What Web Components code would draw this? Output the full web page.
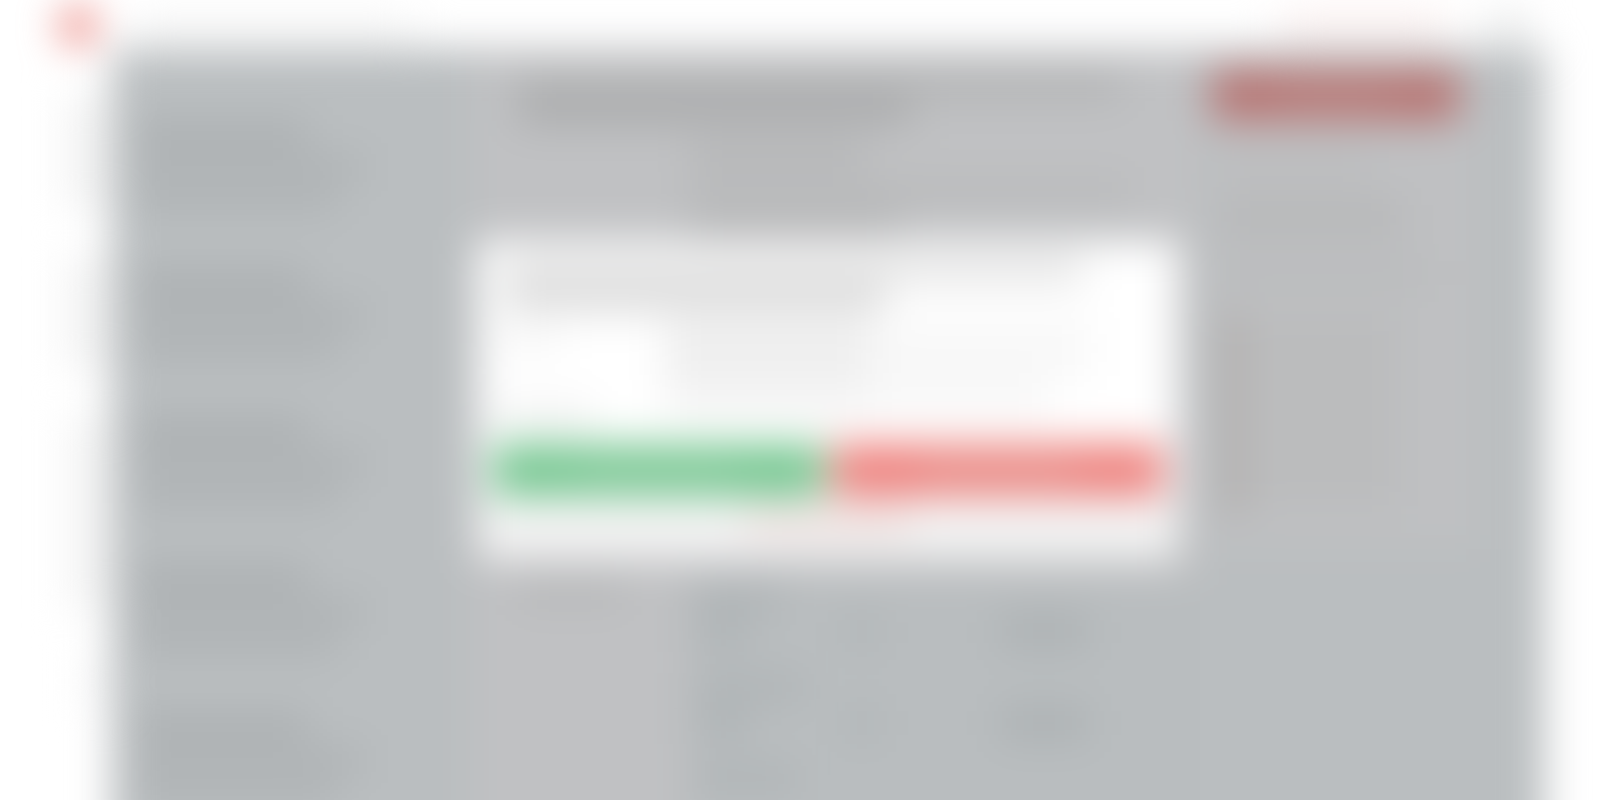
<!DOCTYPE html>
<html lang="en">
<head>
<meta charset="utf-8">
<meta name="viewport" content="width=device-width, initial-scale=1">
<title>Dashboard</title>
<style>
    html,
    body {
        margin: 0;
        height: 100%;
        overflow: hidden;
        background: #fff;
        font-family: 'Open Sans', sans-serif;
    }
</style>
</head>
<body>
<app-page>
    <app-header slot="header"></app-header>
    <app-rail slot="rail"></app-rail>
    <item-list slot="list">
        <list-item></list-item>
        <list-item></list-item>
        <list-item></list-item>
        <list-item></list-item>
        <list-item></list-item>
    </item-list>
    <detail-panel slot="detail"></detail-panel>
    <side-card slot="side"></side-card>
    <confirm-dialog slot="dialog"></confirm-dialog>
</app-page>

<script>
function define(name, html) {
    const template = document.createElement('template');
    template.innerHTML = html;

    customElements.define(name, class extends HTMLElement {
        constructor() {
            super();
            this.attachShadow({ mode: 'open' });
            this.shadowRoot.appendChild(template.content.cloneNode(true));
        }
    });
}

// placeholder bar, sized with --w, --h and --c
define('text-bar', `
<style>
    :host {
        display: block;
        width: var(--w, 100%);
        height: var(--h, 24px);
        background: var(--c, #b1b5b7);
        flex-shrink: 0;
    }
</style>
`);

define('app-page', `
<style>
    :host {
        display: block;
        height: 100vh;
        overflow: hidden;
    }

    .blur {
        filter: blur(20px);
    }

    .page {
        display: grid;
        grid-template-columns: 112px 1fr 56px;
        grid-template-rows: 49px 1fr;
        height: calc(100vh + 64px);
    }

    .header {
        grid-column: 1 / -1;
    }

    main {
        display: grid;
        grid-template-columns: 25fr 51fr 24fr;
        background: #babec0;
        min-height: 0;
        overflow: hidden;
    }

    .overlay {
        position: absolute;
        inset: 0 56px 0 112px;
        height: 100vh;
        display: flex;
        justify-content: center;
        align-items: center;
    }
</style>
<div class="blur">
    <div class="page">
        <div class="header"><slot name="header"></slot></div>
        <slot name="rail"></slot>
        <main>
            <slot name="list"></slot>
            <slot name="detail"></slot>
            <slot name="side"></slot>
        </main>
    </div>
    <div class="overlay"><slot name="dialog"></slot></div>
</div>
`);

define('app-header', `
<style>
    :host {
        display: block;
    }

    header {
        display: flex;
        align-items: center;
        height: 49px;
        padding: 0 72px 0 60px;
    }

    svg {
        width: 36px;
        height: 40px;
        margin-right: 36px;
    }

    .space {
        flex: 1;
    }

    nav {
        display: flex;
        gap: 40px;
    }
</style>
<header>
    <svg viewBox="0 0 36 40" aria-hidden="true"><ellipse cx="18" cy="21" rx="18" ry="19" fill="#ea7f78"/></svg>
    <text-bar style="--w: 280px; --c: #f7f7f7"></text-bar>
    <div class="space"></div>
    <nav>
        <text-bar style="--w: 168px; --c: #fbeeed"></text-bar>
        <text-bar style="--w: 40px; --c: #e6e7e7"></text-bar>
    </nav>
</header>
`);

define('app-rail', `
<style>
    :host {
        display: block;
    }

    nav {
        display: flex;
        flex-direction: column;
        align-items: flex-end;
        gap: 48px;
        padding-top: 48px;
    }
</style>
<nav>
    <text-bar style="--w: 48px; --h: 112px; --c: #f4f4f4"></text-bar>
    <text-bar style="--w: 48px; --h: 112px; --c: #f4f4f4"></text-bar>
    <text-bar style="--w: 48px; --h: 192px; --c: #f6f6f6"></text-bar>
    <text-bar style="--w: 40px; --h: 48px; --c: #fcfcfc"></text-bar>
</nav>
`);

define('item-list', `
<style>
    :host {
        display: block;
        padding: 72px 48px 0 24px;
    }

    .list {
        display: flex;
        flex-direction: column;
        gap: 48px;
    }
</style>
<div class="list"><slot></slot></div>
`);

define('list-item', `
<style>
    :host {
        display: flex;
        flex-direction: column;
        gap: 8px;
        height: 100px;
    }
</style>
<text-bar style="--w: 60%; --h: 26px; --c: #abafb1"></text-bar>
<text-bar style="--w: 80%; --h: 24px; --c: #aeb2b4"></text-bar>
<text-bar style="--w: 70%; --h: 24px; --c: #aeb2b4"></text-bar>
`);

define('detail-panel', `
<style>
    :host {
        display: block;
        background: #c0c1c3;
    }

    .title {
        padding: 24px 48px 0;
    }

    .intro {
        display: flex;
        flex-direction: column;
        gap: 8px;
        padding: 16px 72px 0 220px;
        height: 456px;
        box-sizing: border-box;
    }

    .body {
        display: grid;
        grid-template-columns: 216px 1fr;
    }

    .label {
        padding: 0 48px;
    }

    .rows {
        background: #b9bdbf;
        height: 400px;
        padding: 4px 112px 0 8px;
    }

    .row {
        display: grid;
        grid-template-columns: 152px 1fr 88px;
        align-content: start;
        row-gap: 8px;
        height: 92px;
    }

    .row :first-child {
        grid-column: 1 / -1;
    }
</style>
<div class="title">
    <text-bar style="--w: 95%; --h: 26px; --c: #b3b4b5"></text-bar>
    <text-bar style="--w: 62%; --c: #a9aaab"></text-bar>
</div>
<div class="intro">
    <text-bar style="--w: 40%; --h: 32px; --c: #b6b7b8"></text-bar>
    <text-bar style="--w: 100%; --c: #b9babb"></text-bar>
    <text-bar style="--w: 48%; --h: 48px; --c: #b4b5b6"></text-bar>
</div>
<div class="body">
    <div class="label"><text-bar style="--w: 104px; --c: #b7b8b9"></text-bar></div>
    <div class="rows">
        <div class="row">
            <text-bar style="--w: 88px; --c: #aeb3b5"></text-bar>
            <text-bar style="--w: 56px; --h: 32px; --c: #afb4b6"></text-bar>
            <text-bar style="--w: 32px; --h: 32px; --c: #b0b5b7"></text-bar>
            <text-bar style="--h: 32px; --c: #acb1b3"></text-bar>
        </div>
        <div class="row">
            <text-bar style="--w: 112px; --c: #aeb3b5"></text-bar>
            <text-bar style="--w: 56px; --h: 32px; --c: #afb4b6"></text-bar>
            <text-bar style="--w: 32px; --h: 32px; --c: #b0b5b7"></text-bar>
            <text-bar style="--h: 32px; --c: #acb1b3"></text-bar>
        </div>
        <div class="row">
            <text-bar style="--w: 104px; --c: #aeb3b5"></text-bar>
        </div>
    </div>
</div>
`);

define('side-card', `
<style>
    :host {
        display: block;
        padding: 20px 64px 0 12px;
    }

    section {
        background: #bfc0c2;
        height: 480px;
    }

    button {
        display: flex;
        justify-content: center;
        align-items: center;
        width: 92%;
        height: 52px;
        border: 0;
        border-radius: 4px;
        background: #b87674;
        cursor: pointer;
    }

    .lines {
        display: flex;
        flex-direction: column;
        gap: 24px;
        padding: 32px 0 0 8px;
    }

    .facts {
        display: grid;
        grid-template-columns: 32px 1fr;
        gap: 16px;
    }
</style>
<section>
    <button type="button" aria-label="Primary action"><text-bar style="--w: 48%; --h: 16px; --c: #ba8583"></text-bar></button>
    <div class="lines">
        <text-bar style="--w: 56%; --c: #bbbcbd"></text-bar>
        <text-bar style="--w: 70%; --h: 32px; --c: #b6b7b8"></text-bar>
        <text-bar style="--w: 80%; --h: 32px; --c: #babcbd"></text-bar>
        <div class="facts">
            <text-bar style="--h: 200px; --c: #b3b1b0"></text-bar>
            <text-bar style="--w: 60%; --h: 192px; --c: #bbbcbd"></text-bar>
        </div>
    </div>
</section>
`);

define('confirm-dialog', `
<style>
    :host {
        display: block;
        width: 49%;
    }

    .dialog {
        background: #fff;
        padding: 16px 16px 0;
    }

    .title {
        padding: 0 80px 0 12px;
    }

    .info {
        display: grid;
        grid-template-columns: 172px 1fr;
        height: 132px;
    }

    .labels {
        display: flex;
        flex-direction: column;
        justify-content: space-between;
        padding: 16px 0 16px 4px;
    }

    .values {
        padding: 8px 72px 0 0;
    }

    .split {
        display: flex;
    }

    .actions {
        display: grid;
        grid-template-columns: 1fr 1fr;
        gap: 8px;
    }

    button {
        display: flex;
        justify-content: center;
        align-items: center;
        height: 52px;
        border: 0;
        border-radius: 4px;
        background: #76c791;
        cursor: pointer;
    }

    button.decline {
        background: #ee817d;
    }

    footer {
        display: flex;
        justify-content: center;
        margin: 0 -16px;
        padding: 12px 0 28px;
        background: #f3f3f3;
    }

    a {
        display: block;
    }
</style>
<div class="dialog" role="dialog" aria-modal="true" aria-label="Confirmation">
    <div class="title">
        <text-bar style="--w: 100%; --h: 28px; --c: #e4e4e4"></text-bar>
        <text-bar style="--w: 66%; --h: 28px; --c: #dcdcdc"></text-bar>
    </div>
    <div class="info">
        <div class="labels">
            <text-bar style="--w: 64px; --c: #f6f6f6"></text-bar>
            <text-bar style="--w: 96px; --c: #f0f0f0"></text-bar>
        </div>
        <div class="values">
            <div class="split">
                <text-bar style="--w: 48%; --h: 56px; --c: #eeeeee"></text-bar>
                <text-bar style="--w: 52%; --h: 56px; --c: #f8f8f8"></text-bar>
            </div>
            <div class="split">
                <text-bar style="--w: 48%; --h: 40px; --c: #f4f4f4"></text-bar>
                <text-bar style="--w: 42%; --h: 40px; --c: #f8f8f8"></text-bar>
            </div>
        </div>
    </div>
    <div class="actions">
        <button type="button" aria-label="Accept"><text-bar style="--w: 48%; --h: 16px; --c: #8acd9f"></text-bar></button>
        <button type="button" class="decline" aria-label="Decline"><text-bar style="--w: 48%; --h: 16px; --c: #e69a94"></text-bar></button>
    </div>
    <footer>
        <a href="#" aria-label="Cancel"><text-bar style="--w: 168px; --c: #eedddb"></text-bar></a>
    </footer>
</div>
`);
</script>
</body>
</html>
